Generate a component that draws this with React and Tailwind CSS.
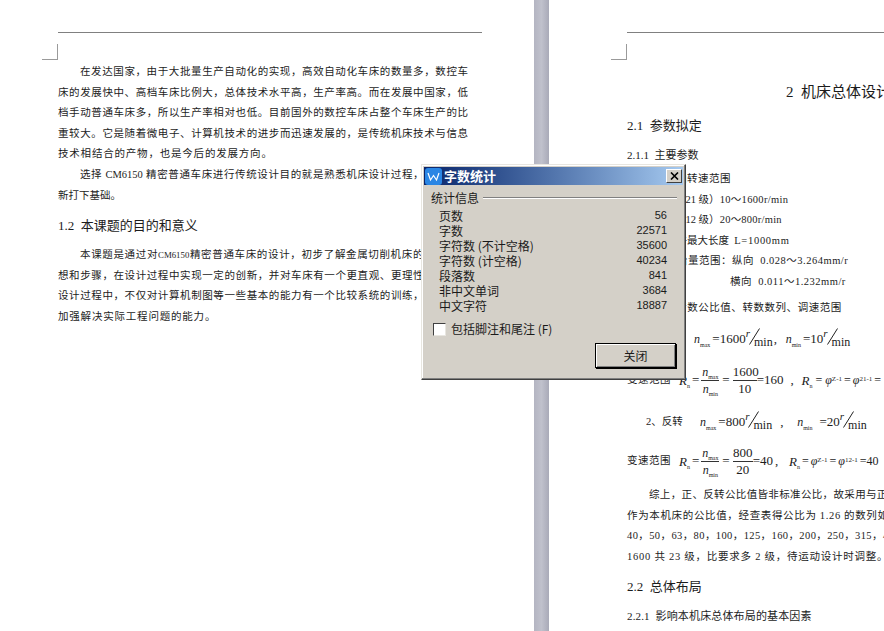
const BODY = 'h-[20.6px] leading-[20.6px] text-[10.5px] text-[#1c1c1c] whitespace-nowrap';
const JUST = '[text-align:justify] [text-align-last:justify]';
function Line({ children, indent, just, className = '' }) {
  return (
    <div className={`${BODY} ${indent ? 'pl-[22px]' : ''} ${just ? JUST : ''} ${className}`}>{children}</div>
  );
}
function Frac({ top, bottom, w }) {
  return (
    <span className={`inline-flex flex-col items-center shrink-0 ${w}`}>
      <span className="w-full text-center text-[13px] leading-[16px] border-b border-[#333]">{top}</span>
      <span className="text-center text-[13px] leading-[16px]">{bottom}</span>
    </span>
  );
}
function N({ s }) {
  return <span className="italic text-[12px] leading-none shrink-0">n<sub className="not-italic text-[6px] align-[-2px]">{s}</sub></span>;
}
function R() {
  return <span className="italic text-[13px] leading-none shrink-0">R<sub className="not-italic text-[6px] align-[-2px]">n</sub></span>;
}
function Phi({ e }) {
  return <span className="italic text-[12px] leading-none shrink-0">φ<sup className="not-italic text-[7px]">{e}</sup></span>;
}
function Unit() {
  return (
    <span className="inline-flex items-start text-[12px] leading-none shrink-0">
      <i className="text-[11px] -mt-[3px]">r</i>
      <svg width="11" height="17" viewBox="0 0 11 17" className="-mt-[3px] -ml-[1px]"><path d="M10.5 0.5 L0.5 16.5" stroke="#222" fill="none" /></svg>
      <span className="mt-[5px] -ml-[6px]">min</span>
    </span>
  );
}
function Stat({ label, value }) {
  return (
    <div className="flex justify-between h-[15px] leading-[15px]">
      <span>{label}</span>
      <span className="text-[11px]" style={{ fontFamily: '"Liberation Sans", sans-serif' }}>{value}</span>
    </div>
  );
}
function Crop() {
  return (
    <div className="h-[27px] flex">
      <div className="w-[16px] h-[16px] mt-[11px] border-b border-r border-[#9a9a9a] -ml-[16px]" />
    </div>
  );
}
function Dialog() {
  return (
    <div className="absolute left-[421px] top-[164px] w-[265px] h-[216px] bg-[#d4d0c8] border border-t-[#e8e6e0] border-l-[#e8e6e0] border-r-[#404040] border-b-[#404040] shadow-[inset_-1px_-1px_0_#808080,inset_1px_1px_0_#ffffff] p-[2px] text-[12px] text-[#1a1a1a]" style={{ fontFamily: '"Noto Sans CJK SC", "Liberation Sans", sans-serif' }}>
      <div className="h-[18px] flex items-center pl-[1px] pr-[1px] bg-gradient-to-r from-[#0a246a] to-[#a6caf0]">
        <svg width="17" height="17" viewBox="0 0 17 17" className="shrink-0">
          <rect width="17" height="17" rx="3" fill="#2a86e4" />
          <path d="M3 5 L5.5 12 L8.5 7.5 L11.5 12 L14 5" fill="none" stroke="#fff" strokeWidth="1.2" />
        </svg>
        <span className="ml-[2px] -mt-[2px] text-[13px] font-bold text-white leading-none">字数统计</span>
        <div className="ml-auto w-[16px] h-[14px] bg-[#d4d0c8] border border-t-white border-l-white border-r-[#404040] border-b-[#404040] flex items-center justify-center">
          <svg width="9" height="8" viewBox="0 0 9 8"><path d="M1 0.5 L8 7.5 M8 0.5 L1 7.5" stroke="#000" strokeWidth="1.6" fill="none" /></svg>
        </div>
      </div>
      <div className="pl-[7px] pr-[6px] pt-[5px]">
        <div className="flex items-center h-[16px]">
          <span>统计信息</span>
          <div className="flex-1 ml-[4px] h-[2px] border-t border-b border-t-[#808080] border-b-white" />
        </div>
        <div className="pl-[8px] pr-[10px] mt-[2px] text-[12px]">
          <Stat label="页数" value="56" />
          <Stat label="字数" value="22571" />
          <Stat label="字符数 (不计空格)" value="35600" />
          <Stat label="字符数 (计空格)" value="40234" />
          <Stat label="段落数" value="841" />
          <Stat label="非中文单词" value="3684" />
          <Stat label="中文字符" value="18887" />
        </div>
        <div className="flex items-center mt-[8px] h-[16px] pl-[2px]">
          <div className="w-[13px] h-[13px] bg-white border border-t-[#404040] border-l-[#404040] border-r-[#e8e6e0] border-b-[#e8e6e0]" />
          <span className="ml-[5px]">包括脚注和尾注 (F)</span>
        </div>
        <div className="flex justify-end mt-[6px] pr-[1px]">
          <div className="w-[81px] h-[25px] border border-black bg-[#d4d0c8] shadow-[inset_1px_1px_0_#ffffff,inset_-1px_-1px_0_#808080,1px_1px_0_#000000] flex items-center justify-center">关闭</div>
        </div>
      </div>
    </div>
  );
}
export default function App() {
  return (
    <div className="relative w-[884px] h-[631px] overflow-hidden flex bg-white" style={{ fontFamily: '"Liberation Serif", "Noto Sans CJK SC", serif' }}>
      <div className="w-[534px] shrink-0 pl-[58px] pt-[32px] overflow-hidden">
        <div className="w-[424px] border-t border-[#808080]" />
        <Crop />
        <div className="w-[410px] pt-[2px]">
          <Line indent just>在发达国家，由于大批量生产自动化的实现，高效自动化车床的数量多，数控车</Line>
          <Line just>床的发展快中、高档车床比例大，总体技术水平高，生产率高。而在发展中国家，低</Line>
          <Line just>档手动普通车床多，所以生产率相对也低。目前国外的数控车床占整个车床生产的比</Line>
          <Line just>重较大。它是随着微电子、计算机技术的进步而迅速发展的，是传统机床技术与信息</Line>
          <Line className="tracking-[0.8px]">技术相结合的产物，也是今后的发展方向。</Line>
          <Line indent just>选择 CM6150 精密普通车床进行传统设计目的就是熟悉机床设计过程，并为今后</Line>
          <Line>新打下基础。</Line>
          <div className="h-[20px] mt-[10px] mb-[9px] text-[13px] leading-[20px] text-[#1c1c1c]">1.2&nbsp;&nbsp;本课题的目的和意义</div>
          <Line indent just>本课题是通过对<span className="text-[8.8px]">CM6150</span>精密普通车床的设计，初步了解金属切削机床的设计思想</Line>
          <Line just>想和步骤，在设计过程中实现一定的创新，并对车床有一个更直观、更理性的认识。</Line>
          <Line just>设计过程中，不仅对计算机制图等一些基本的能力有一个比较系统的训练，也培养了</Line>
          <Line className="tracking-[0.8px]">加强解决实际工程问题的能力。</Line>
        </div>
      </div>
      <div className="w-[15px] shrink-0 bg-gradient-to-r from-[#b4b5c2] via-[#c0c1cc] to-[#a9aab8]" />
      <div className="flex-1 min-w-0 pl-[78px] pt-[32px] overflow-hidden whitespace-nowrap text-[#1c1c1c]">
        <div className="w-[400px] border-t border-[#808080]" />
        <Crop />
        <div className="h-[24px] mt-[20px] pl-[159px] text-[15px] leading-[24px]">2&nbsp;&nbsp;机床总体设计</div>
        <div className="h-[20px] mt-[12px] text-[13px] leading-[20px]">2.1&nbsp;&nbsp;参数拟定</div>
        <div className="h-[20px] mt-[9px] text-[11px] leading-[20px]">2.1.1&nbsp;&nbsp;主要参数</div>
        <div className="mt-[4px]">
          <Line className="pl-[38px] tracking-[0.5px]">主轴转速范围</Line>
          <Line className="pl-[27px]">正转（21 级）<span className="tracking-[0.33px]">10～1600r/min</span></Line>
          <Line className="pl-[27px]">反转（12 级）<span className="tracking-[0.25px]">20～800r/min</span></Line>
          <Line className="pl-[39px]">工件最大长度&nbsp;&nbsp;<span className="tracking-[0.7px]">L=1000mm</span></Line>
          <Line className="pl-[39px] tracking-[0.5px]">进给量范围：纵向&nbsp;&nbsp;0.028～3.264mm/r</Line>
          <Line className="pl-[103px] tracking-[0.5px]">横向&nbsp;&nbsp;0.011～1.232mm/r</Line>
          <Line className="pl-[27px] mt-[5px] tracking-[0.55px]">确定转数公比值、转数数列、调速范围</Line>
        </div>
        <div className="h-[24px] mt-[9px] pl-[67px] text-[13px] flex items-center">
          <N s="max" /><span className="ml-[2px]">=1600</span><Unit /><span className="ml-[1px] w-[12px] shrink-0">,</span><N s="min" /><span className="ml-[2px]">=10</span><Unit />
        </div>
        <div className="h-[40px] mt-[9px] text-[10.5px] flex items-center">
          <span className="tracking-[0.5px] w-[52px] shrink-0">变速范围</span><R />
          <span className="text-[13px] ml-[2px] mr-[2px]">=</span>
          <Frac top={<N s="max" />} bottom={<N s="min" />} w="w-[18px]" />
          <span className="text-[13px] mx-[3px]">=</span>
          <Frac top="1600" bottom="10" w="w-[24px]" />
          <span className="text-[13px]">=160</span>
          <span className="text-[13px] ml-[7px] w-[11px] shrink-0">,</span><R />
          <span className="text-[12px] mx-[3px]">=</span><Phi e="Z-1" />
          <span className="text-[12px] mx-[2px]">=</span><Phi e="21-1" />
          <span className="text-[12px] ml-[2px]">=</span>
        </div>
        <div className="h-[24px] mt-[10px] pl-[19px] text-[13px] flex items-center">
          <span className="text-[10.5px] w-[54px] shrink-0">2、反转</span><N s="max" /><span className="ml-[2px]">=800</span><Unit /><span className="ml-[8px] w-[17px] shrink-0">,</span><N s="min" /><span className="ml-[7px]">=20</span><Unit />
        </div>
        <div className="h-[40px] mt-[7px] text-[10.5px] flex items-center">
          <span className="tracking-[0.5px] w-[52px] shrink-0">变速范围</span><R />
          <span className="text-[13px] ml-[2px] mr-[2px]">=</span>
          <Frac top={<N s="max" />} bottom={<N s="min" />} w="w-[18px]" />
          <span className="text-[13px] mx-[3px]">=</span>
          <Frac top="800" bottom="20" w="w-[20px]" />
          <span className="text-[13px]">=40</span>
          <span className="text-[13px] ml-[2px] w-[14px] shrink-0">,</span><R />
          <span className="text-[12px] mx-[2px]">=</span><Phi e="Z-1" />
          <span className="text-[12px] mx-[2px]">=</span><Phi e="12-1" />
          <span className="text-[12px] ml-[2px]">=40</span>
        </div>
        <div className="mt-[4px]">
          <Line className="pl-[22px] tracking-[0.35px]">综上，正、反转公比值皆非标准公比，故采用与正转相同的公比</Line>
          <Line className="tracking-[0.65px]">作为本机床的公比值，经查表得公比为 1.26 的数列如下：</Line>
          <Line className="tracking-[0.4px]">40，50，63，80，100，125，160，200，250，315，400</Line>
          <Line className="tracking-[0.75px]">1600 共 23 级，比要求多 2 级，待运动设计时调整。</Line>
        </div>
        <div className="h-[20px] mt-[9px] text-[13px] leading-[20px]">2.2&nbsp;&nbsp;总体布局</div>
        <div className="h-[20px] mt-[9px] text-[11px] leading-[20px] tracking-[0.15px]">2.2.1&nbsp;&nbsp;影响本机床总体布局的基本因素</div>
      </div>
      <Dialog />
    </div>
  );
}
